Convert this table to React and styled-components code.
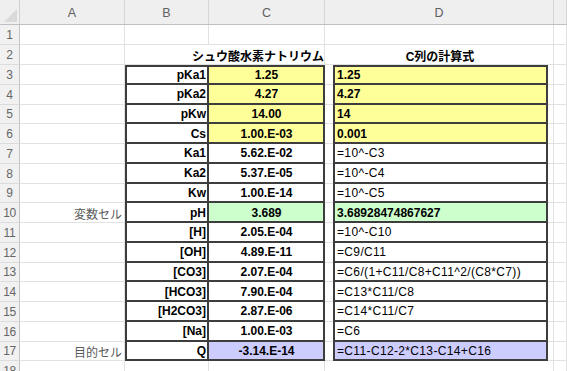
import styled, { createGlobalStyle, css } from "styled-components";

const GlobalStyle = createGlobalStyle`
  html, body {
    margin: 0;
    padding: 0;
    background: #fff;
  }
  body {
    font-family: "Liberation Sans", "Noto Sans CJK JP", sans-serif;
    color: #000;
  }
`;

// 列の幅 (行番号, A, B, C, D, E)
const W = { head: 20, a: 105, b: 84, c: 116, d: 229, e: 13 };
const LINE = "#3d3d3d";
const FILL = { yellow: "#ffff99", green: "#ccffcc", lavender: "#ccccff" };

const Sheet = styled.div`
  width: 567px;
  height: 371px;
  overflow: hidden;
  display: flex;
  flex-direction: column;
  background: #fff;
`;

const HeaderRow = styled.div`
  display: flex;
  flex: none;
  height: 25px;
  box-sizing: border-box;
  background: #efefef;
  border-bottom: 1px solid #bfbfbf;
`;

const Corner = styled.div`
  width: ${W.head}px;
  flex: none;
  box-sizing: border-box;
  border-right: 1px solid #d2d2d2;
  svg {
    display: block;
  }
`;

const ColHead = styled.div`
  width: ${(p) => p.$w}px;
  flex: none;
  box-sizing: border-box;
  display: flex;
  align-items: center;
  justify-content: center;
  padding-top: 2px;
  border-right: 1px solid #d6d6d6;
  color: #606060;
  font-size: 12.5px;
`;

const Row = styled.div`
  display: flex;
  flex: none;
  height: ${(p) => p.$h}px;
`;

const RowNum = styled.div`
  width: ${W.head}px;
  flex: none;
  box-sizing: border-box;
  display: flex;
  align-items: center;
  justify-content: center;
  padding-top: 1px;
  background: #f1f1f1;
  border-right: 1px solid #c4c4c4;
  border-bottom: 1px solid #dcdcdc;
  color: #666;
  font-size: 12px;
  letter-spacing: -0.3px;
`;

const Cell = styled.div`
  width: ${(p) => p.$w}px;
  flex: none;
  box-sizing: border-box;
  display: flex;
  align-items: center;
  justify-content: ${(p) => p.$align || "flex-start"};
  padding: 1px 1px 0 2px;
  font-size: 12px;
  font-weight: ${(p) => (p.$bold ? 700 : 400)};
  white-space: nowrap;
  background: ${(p) => (p.$fill ? FILL[p.$fill] : "transparent")};
  box-shadow: ${(p) =>
    p.$onlyBottom ? "inset 0 -1px 0 #e1e1e1" : "inset -1px -1px 0 #e1e1e1"};

  ${(p) =>
    p.$boxed &&
    css`
      box-shadow: none;
      border-right: 2px solid ${LINE};
      border-bottom: 2px solid ${LINE};
    `}
  ${(p) =>
    p.$boxLeft &&
    css`
      border-left: 2px solid ${LINE};
    `}
  ${(p) =>
    p.$boxTop &&
    css`
      border-top: 2px solid ${LINE};
    `}
`;

const Note = styled(Cell)`
  justify-content: flex-end;
  padding-right: 3px;
  color: #5a5a5a;
  font-family: "Noto Sans CJK JP", sans-serif;
  font-size: 12px;
`;

const Title = styled(Cell)`
  font-family: "Liberation Sans", "Noto Sans CJK JP", sans-serif;
  font-weight: 700;
  overflow: visible;
`;

const DSlot = styled(Cell)`
  padding: 0 6px 0 8px;
  align-items: stretch;
`;

const FormulaBox = styled.div`
  flex: 1;
  box-sizing: border-box;
  display: flex;
  align-items: center;
  padding: 1px 0 0 2px;
  background: ${(p) => (p.$fill ? FILL[p.$fill] : "#fff")};
  border-left: 2px solid ${LINE};
  border-right: 2px solid ${LINE};
  border-bottom: 2px solid ${LINE};
  border-top: ${(p) => (p.$top ? `2px solid ${LINE}` : "none")};
  font-weight: ${(p) => (p.$formula ? 400 : 700)};
  letter-spacing: ${(p) => (p.$formula ? "0.35px" : "0")};
`;

const rows = [
  { b: "pKa1", c: "1.25", d: "1.25", fill: "yellow" },
  { b: "pKa2", c: "4.27", d: "4.27", fill: "yellow" },
  { b: "pKw", c: "14.00", d: "14", fill: "yellow" },
  { b: "Cs", c: "1.00.E-03", d: "0.001", fill: "yellow" },
  { b: "Ka1", c: "5.62.E-02", d: "=10^-C3" },
  { b: "Ka2", c: "5.37.E-05", d: "=10^-C4" },
  { b: "Kw", c: "1.00.E-14", d: "=10^-C5" },
  { a: "変数セル", b: "pH", c: "3.689", d: "3.68928474867627", fill: "green" },
  { b: "[H]", c: "2.05.E-04", d: "=10^-C10" },
  { b: "[OH]", c: "4.89.E-11", d: "=C9/C11" },
  { b: "[CO3]", c: "2.07.E-04", d: "=C6/(1+C11/C8+C11^2/(C8*C7))" },
  { b: "[HCO3]", c: "7.90.E-04", d: "=C13*C11/C8" },
  { b: "[H2CO3]", c: "2.87.E-06", d: "=C14*C11/C7" },
  { b: "[Na]", c: "1.00.E-03", d: "=C6" },
  { a: "目的セル", b: "Q", c: "-3.14.E-14", d: "=C11-C12-2*C13-C14+C16", fill: "lavender" },
];

function EmptyRow({ n, h }) {
  return (
    <Row $h={h}>
      <RowNum>{n}</RowNum>
      <Cell $w={W.a} />
      <Cell $w={W.b} />
      <Cell $w={W.c} />
      <Cell $w={W.d} />
      <Cell $w={W.e} />
    </Row>
  );
}

function App() {
  return (
    <>
      <GlobalStyle />
      <Sheet>
        <HeaderRow>
          <Corner>
            <svg width="19" height="24" viewBox="0 0 19 24">
              <polygon points="17,9 17,22 4,22" fill="#d9d9d9" />
            </svg>
          </Corner>
          <ColHead $w={W.a}>A</ColHead>
          <ColHead $w={W.b}>B</ColHead>
          <ColHead $w={W.c}>C</ColHead>
          <ColHead $w={W.d}>D</ColHead>
          <ColHead $w={W.e} />
        </HeaderRow>

        <EmptyRow n={1} h={20} />

        <Row $h={20}>
          <RowNum>2</RowNum>
          <Cell $w={W.a} />
          <Cell $w={W.b} $onlyBottom />
          <Title $w={W.c} $align="flex-end">
            シュウ酸水素ナトリウム
          </Title>
          <Title $w={W.d} $align="center">
            C列の計算式
          </Title>
          <Cell $w={W.e} />
        </Row>

        {rows.map((r, i) => {
          const formula = r.d.startsWith("=");
          return (
            <Row $h={19.75} key={i}>
              <RowNum>{i + 3}</RowNum>
              {r.a ? <Note $w={W.a}>{r.a}</Note> : <Cell $w={W.a} />}
              <Cell $w={W.b} $align="flex-end" $bold $boxed $boxLeft $boxTop={i === 0}>
                {r.b}
              </Cell>
              <Cell $w={W.c} $align="center" $bold $boxed $boxTop={i === 0} $fill={r.fill}>
                {r.c}
              </Cell>
              <DSlot $w={W.d}>
                <FormulaBox $top={i === 0} $fill={r.fill} $formula={formula}>
                  {r.d}
                </FormulaBox>
              </DSlot>
              <Cell $w={W.e} />
            </Row>
          );
        })}

        <EmptyRow n={18} h={20} />
      </Sheet>
    </>
  );
}

export default App;
